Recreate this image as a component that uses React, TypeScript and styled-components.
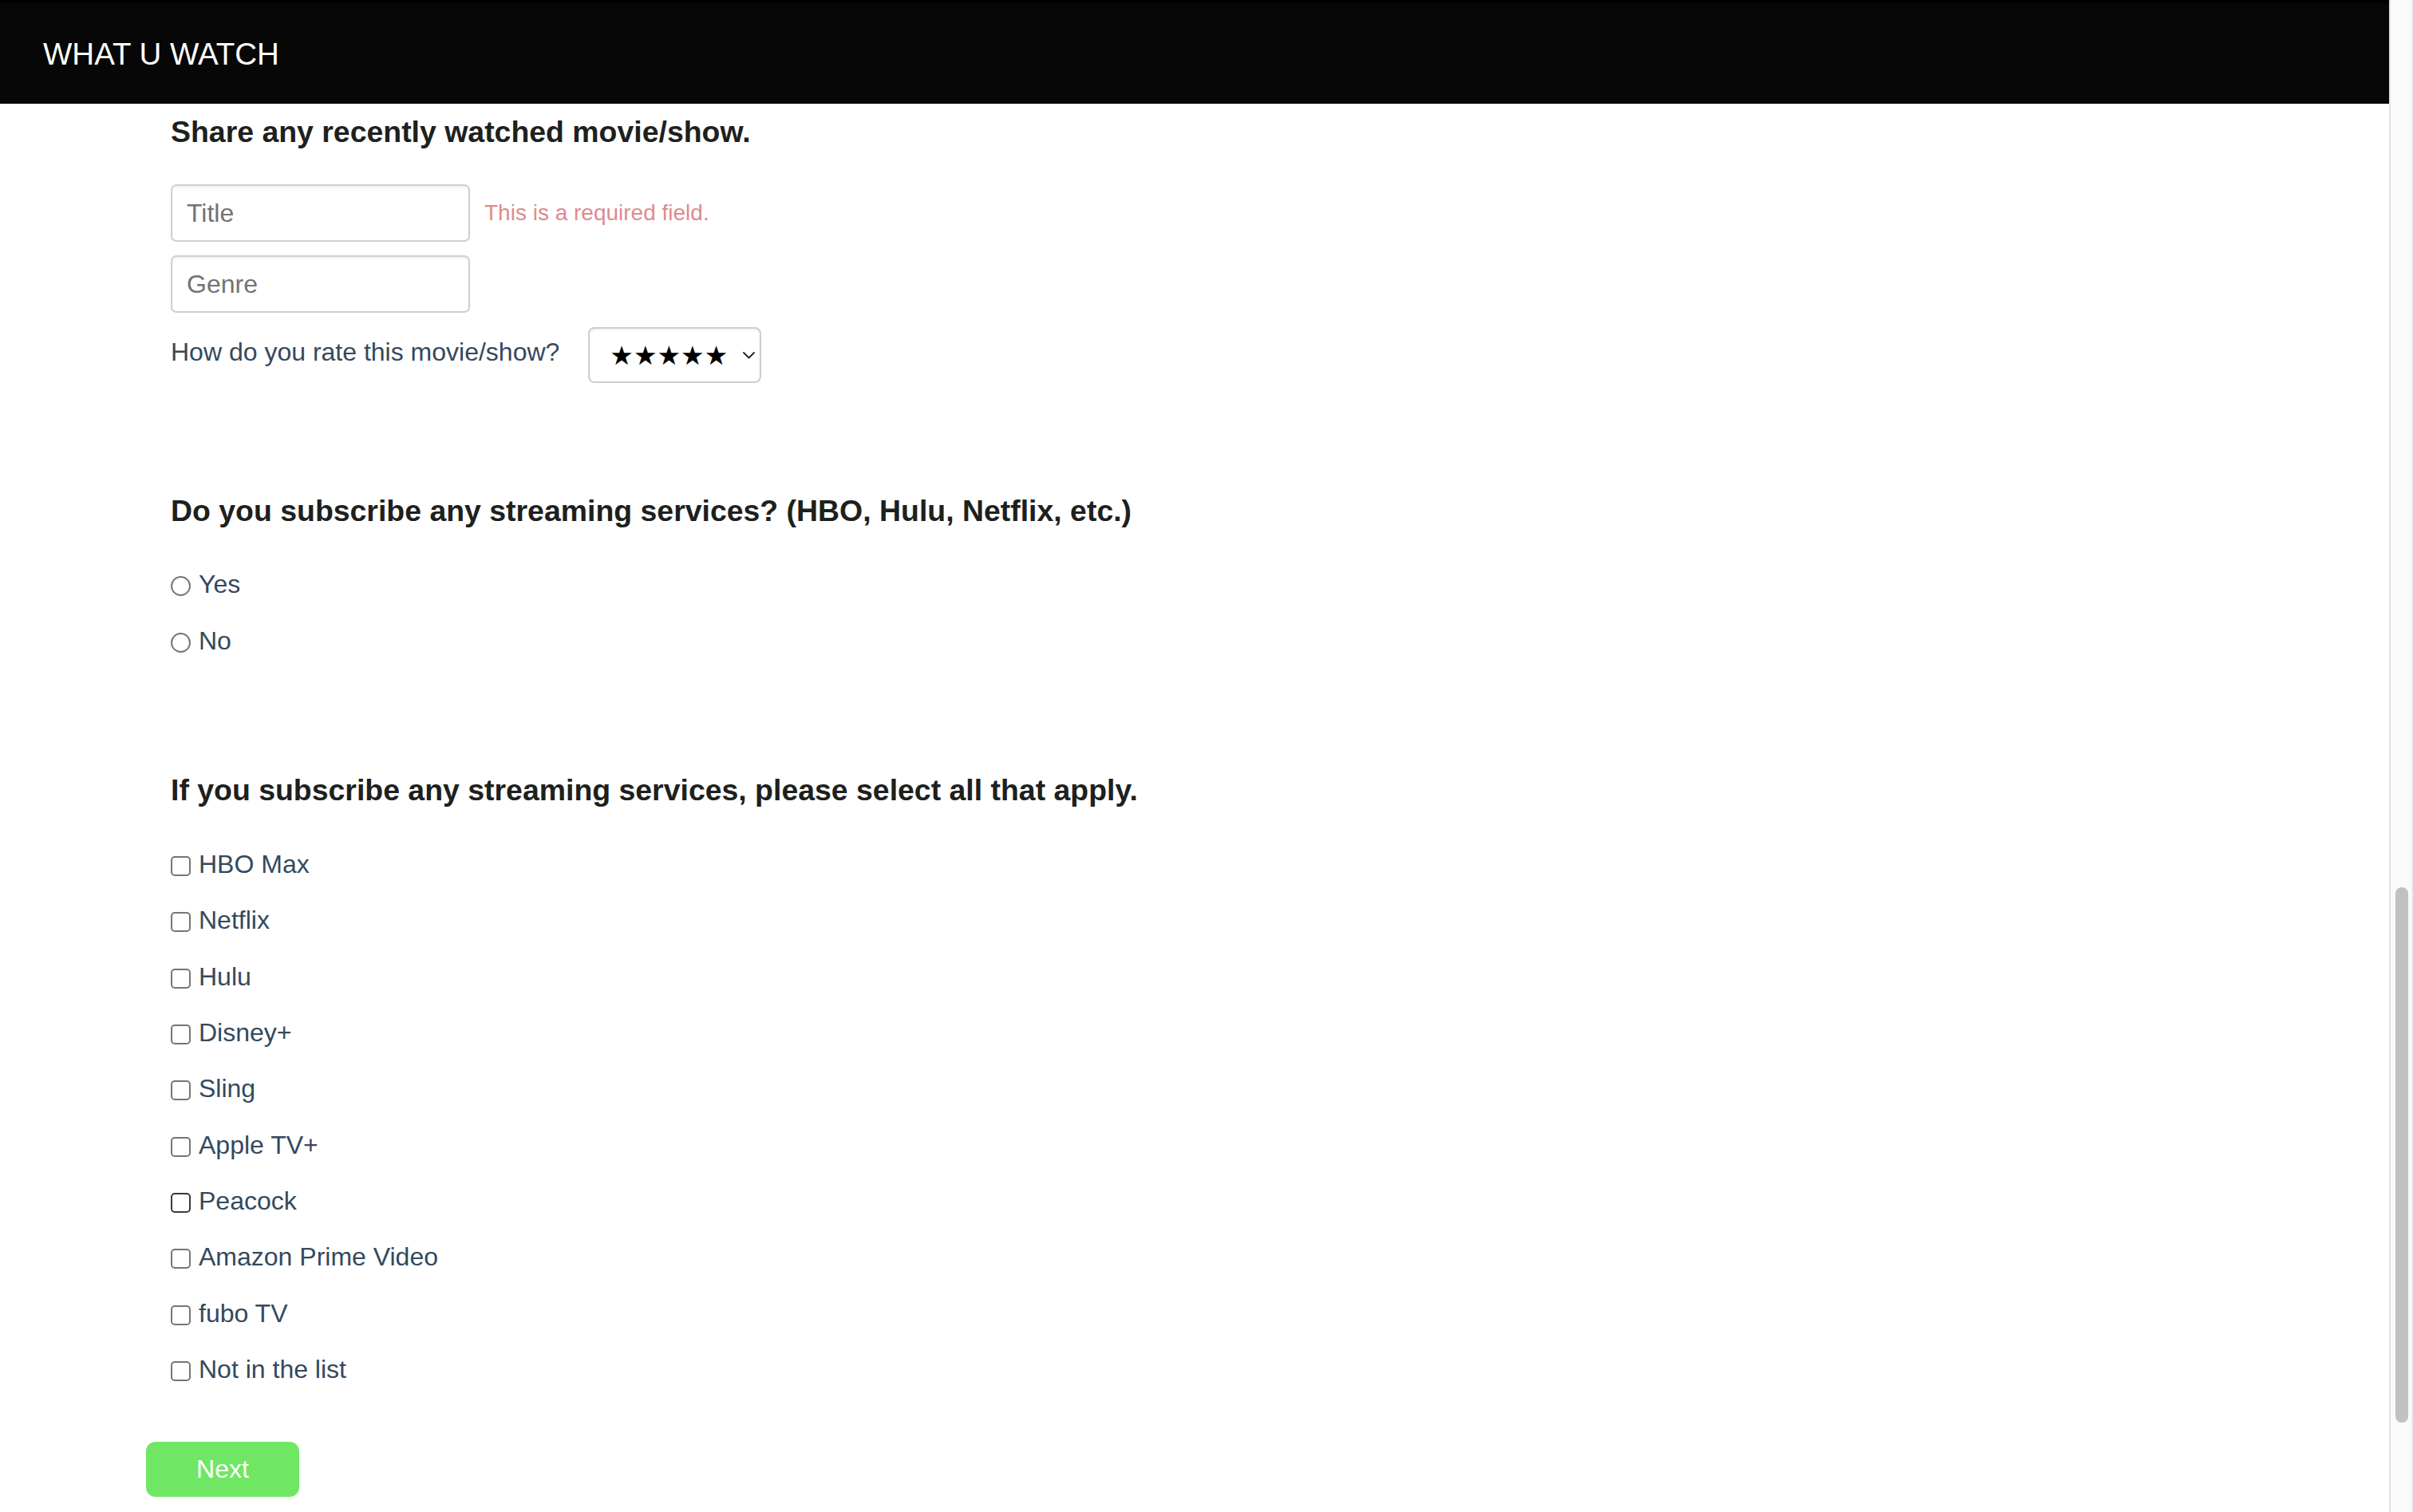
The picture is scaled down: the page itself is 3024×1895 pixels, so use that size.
import React from "react";
import styled, { createGlobalStyle } from "styled-components";

const GlobalStyle = createGlobalStyle`
  html, body {
    margin: 0;
    padding: 0;
    background: #ffffff;
    overflow: hidden;
  }
  body {
    font-family: "Liberation Sans", Arial, Helvetica, sans-serif;
  }
  * { box-sizing: border-box; }
`;

const Shell = styled.div`
  display: flex;
  width: 100vw;
  height: 100vh;
  background: #fff;
`;

const Page = styled.div`
  flex: 1;
  min-width: 0;
  display: flex;
  flex-direction: column;
`;

const Header = styled.header`
  height: 130px;
  flex-shrink: 0;
  border-top: 4px solid #000;
  background: #070707;
  display: flex;
  align-items: center;
  padding-left: 54px;
`;

const Brand = styled.div`
  color: #ffffff;
  font-size: 38.5px;
  line-height: 43px;
  font-weight: 400;
`;

const Main = styled.main`
  display: flex;
  flex-direction: column;
  align-items: flex-start;
  padding: 14px 0 0 183px;
`;

const Section = styled.section<{ $gapTop?: number }>`
  display: flex;
  flex-direction: column;
  align-items: flex-start;
  padding-left: 31px;
  margin-top: ${(p) => p.$gapTop ?? 0}px;
`;

const Heading = styled.h3`
  margin: 0;
  font-size: 37.44px;
  line-height: 43px;
  font-weight: 700;
  color: #1d211d;
`;

const Fields = styled.div`
  display: flex;
  flex-direction: column;
  gap: 17px;
  margin-top: 44px;
`;

const FieldRow = styled.div`
  display: flex;
  align-items: center;
  gap: 18px;
`;

const TextInput = styled.input`
  width: 375px;
  height: 72px;
  padding: 0 18px;
  border: 2px solid #cfcfcf;
  border-radius: 7px;
  background: #fff;
  box-shadow: inset 0 2px 3px rgba(0, 0, 0, 0.06);
  font-family: "Liberation Sans", Arial, Helvetica, sans-serif;
  font-size: 32px;
  color: #333;
  outline: none;
  &::placeholder {
    color: #737373;
  }
`;

const ErrorText = styled.span`
  font-size: 28px;
  line-height: 32px;
  color: #de8a8c;
`;

const RatingRow = styled.div`
  display: flex;
  align-items: center;
  gap: 36px;
  margin-top: 1px;
`;

const RatingLabel = styled.label`
  font-size: 32px;
  line-height: 37px;
  color: #34495e;
  margin-bottom: 8px;
`;

const SelectBox = styled.div`
  position: relative;
  width: 217px;
  height: 70px;
`;

const StarSelect = styled.select`
  appearance: none;
  -webkit-appearance: none;
  width: 100%;
  height: 100%;
  padding: 0 0 0 25px;
  border: 2px solid #cdcdcd;
  border-radius: 8px;
  background: #fff;
  box-shadow: inset 0 2px 3px rgba(0, 0, 0, 0.05);
  font-family: "DejaVu Sans", sans-serif;
  font-size: 33px;
  color: #000;
  outline: none;
`;

const Chevron = styled.svg`
  position: absolute;
  right: 8px;
  top: 31px;
  width: 15px;
  height: 9px;
  pointer-events: none;
`;

const OptionList = styled.div<{ $gap: number; $top: number }>`
  display: flex;
  flex-direction: column;
  gap: ${(p) => p.$gap}px;
  margin-top: ${(p) => p.$top}px;
`;

const OptionRow = styled.label`
  display: flex;
  align-items: flex-start;
  gap: 10px;
`;

const Box = styled.input<{ $round?: boolean; $dark?: boolean }>`
  appearance: none;
  -webkit-appearance: none;
  width: 25px;
  height: 25px;
  margin: 8px 0 0 0;
  flex-shrink: 0;
  background: #fff;
  border: 2px solid ${(p) => (p.$dark ? "#3a3a3a" : "#767676")};
  border-radius: ${(p) => (p.$round ? "50%" : "5px")};
`;

const OptionText = styled.span`
  font-size: 32px;
  line-height: 37px;
  color: #34495e;
`;

const NextButton = styled.button`
  margin-top: 72px;
  width: 192px;
  height: 69px;
  border: none;
  border-radius: 12px;
  background: #6fe764;
  color: #ffffff;
  font-family: "Liberation Sans", Arial, Helvetica, sans-serif;
  font-size: 32px;
  cursor: pointer;
`;

const ScrollTrack = styled.div`
  width: 30px;
  flex-shrink: 0;
  background: #fafafa;
  border-left: 2px solid #e4e4e4;
  border-right: 2px solid #ececec;
  display: flex;
  flex-direction: column;
`;

const ScrollThumb = styled.div<{ $top: number; $height: number }>`
  margin: ${(p) => p.$top}px 0 0 6px;
  width: 16px;
  height: ${(p) => p.$height}px;
  border-radius: 8px;
  background: #c1c1c1;
`;

const services = [
  "HBO Max",
  "Netflix",
  "Hulu",
  "Disney+",
  "Sling",
  "Apple TV+",
  "Peacock",
  "Amazon Prime Video",
  "fubo TV",
  "Not in the list",
];

export default function App() {
  return (
    <>
      <GlobalStyle />
      <Shell>
        <Page>
          <Header>
            <Brand>WHAT U WATCH</Brand>
          </Header>
          <Main>
            <Section>
              <Heading>Share any recently watched movie/show.</Heading>
              <Fields>
                <FieldRow>
                  <TextInput placeholder="Title" />
                  <ErrorText>This is a required field.</ErrorText>
                </FieldRow>
                <FieldRow>
                  <TextInput placeholder="Genre" />
                </FieldRow>
                <RatingRow>
                  <RatingLabel>How do you rate this movie/show?</RatingLabel>
                  <SelectBox>
                    <StarSelect defaultValue="5">
                      <option value="5">★★★★★</option>
                      <option value="4">★★★★</option>
                      <option value="3">★★★</option>
                      <option value="2">★★</option>
                      <option value="1">★</option>
                    </StarSelect>
                    <Chevron viewBox="0 0 15 9">
                      <polyline
                        points="1,1 7.5,7.5 14,1"
                        fill="none"
                        stroke="#222"
                        strokeWidth="1.8"
                        strokeLinecap="round"
                        strokeLinejoin="round"
                      />
                    </Chevron>
                  </SelectBox>
                </RatingRow>
              </Fields>
            </Section>

            <Section $gapTop={139}>
              <Heading>
                Do you subscribe any streaming services? (HBO, Hulu, Netflix,
                etc.)
              </Heading>
              <OptionList $gap={34} $top={52}>
                <OptionRow>
                  <Box type="radio" name="subscribe" $round />
                  <OptionText>Yes</OptionText>
                </OptionRow>
                <OptionRow>
                  <Box type="radio" name="subscribe" $round />
                  <OptionText>No</OptionText>
                </OptionRow>
              </OptionList>
            </Section>

            <Section $gapTop={147}>
              <Heading>
                If you subscribe any streaming services, please select all that
                apply.
              </Heading>
              <OptionList $gap={33.33} $top={53}>
                {services.map((s) => (
                  <OptionRow key={s}>
                    <Box type="checkbox" $dark={s === "Peacock"} />
                    <OptionText>{s}</OptionText>
                  </OptionRow>
                ))}
              </OptionList>
            </Section>

            <NextButton>Next</NextButton>
          </Main>
        </Page>
        <ScrollTrack>
          <ScrollThumb $top={1112} $height={671} />
        </ScrollTrack>
      </Shell>
    </>
  );
}
